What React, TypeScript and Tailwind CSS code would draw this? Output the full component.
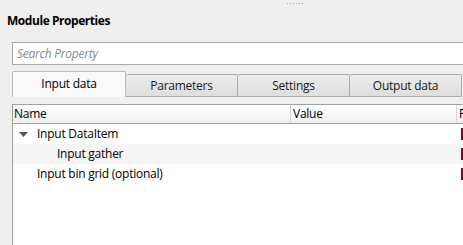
import { useState } from 'react';

type Row = {
  id: string;
  name: string;
  depth: number;
  expandable?: boolean;
  striped?: boolean;
};

const ROWS: Row[] = [
  { id: 'dataitem', name: 'Input DataItem', depth: 0, expandable: true },
  { id: 'gather', name: 'Input gather', depth: 1, striped: true },
  { id: 'bingrid', name: 'Input bin grid (optional)', depth: 0 },
];

const TABS = ['Input data', 'Parameters', 'Settings', 'Output data'];

const font = { fontFamily: '"Open Sans", "Noto Sans", sans-serif' };

export default function App() {
  const [activeTab, setActiveTab] = useState(0);

  return (
    <div
      className="relative h-[245px] w-[463px] overflow-hidden bg-[#efefef] text-[12px] tracking-[-0.25px] text-black"
      style={font}
    >
      {/* splitter grip */}
      <div className="absolute left-[287px] top-[3px] flex gap-[2px]">
        {[0, 1, 2, 3, 4, 5].map((dot) => (
          <span key={dot} className="h-[1px] w-[1px] bg-[#a8a8a8]" />
        ))}
      </div>

      <div className="pl-[7px] pt-[13px] text-[12px] font-bold leading-[16px] tracking-[-0.45px]">
        Module Properties
      </div>

      <div className="ml-[12px] mt-[13px] flex h-[23px] w-[470px] items-center border border-[#a9a9a9] bg-white pl-[4px]">
        <span className="italic leading-none text-[#8a8a8a]">Search Property</span>
      </div>

      {/* tabs */}
      <div className="ml-[12px] mt-[6px] flex h-[26px] items-end">
        {TABS.map((tab, index) => {
          const active = index === activeTab;
          return (
            <button
              key={tab}
              onClick={() => setActiveTab(index)}
              className={
                active
                  ? 'relative z-10 flex h-[26px] w-[114px] items-center justify-center rounded-t-[2px] border border-b-0 border-[#b9b9b9] bg-[#f9f9f9] pb-[1px] leading-none'
                  : 'flex h-[23px] w-[112px] items-center justify-center rounded-t-[2px] border border-l-0 border-[#acacac] bg-gradient-to-b from-[#ececec] to-[#dedede] leading-none text-[#1a1a1a]'
              }
            >
              {tab}
            </button>
          );
        })}
      </div>

      {/* tab pane */}
      <div className="ml-[12px] h-[160px] bg-[#f0f0f0] pt-[7px]">
        <div className="h-full border-l border-t border-[#a0a0a0] bg-white">
          <div className="grid h-[19px] grid-cols-[278px_166px_20px] border-b border-[#a0a0a0] bg-gradient-to-b from-white to-[#efefef]">
            <div className="flex items-center border-r border-[#d5d5d5] pl-[1px] leading-none">Name</div>
            <div className="flex items-center border-r border-[#d5d5d5] pl-[2px] leading-none">Value</div>
            <div className="flex items-center pl-[2px] leading-none">F</div>
          </div>

          {ROWS.map((row) => (
            <div
              key={row.id}
              className={
                row.striped
                  ? 'grid h-[20px] grid-cols-[278px_166px_20px] bg-[#f5f5f5]'
                  : 'grid h-[20px] grid-cols-[278px_166px_20px] bg-white'
              }
            >
              <div
                className="flex items-center leading-none"
                style={{ paddingLeft: 6 + row.depth * 20 }}
              >
                <span className="flex w-[18px] items-center">
                  {row.expandable && (
                    <svg width="9" height="5" viewBox="0 0 9 5">
                      <path d="M0 0h9L4.5 5z" fill="#595959" />
                    </svg>
                  )}
                </span>
                <span>{row.name}</span>
              </div>
              <div />
              <div className="flex items-center pl-[4px]">
                <span className="h-[12px] w-[4px] bg-[#6b0f2a]" />
              </div>
            </div>
          ))}
        </div>
      </div>
    </div>
  );
}
